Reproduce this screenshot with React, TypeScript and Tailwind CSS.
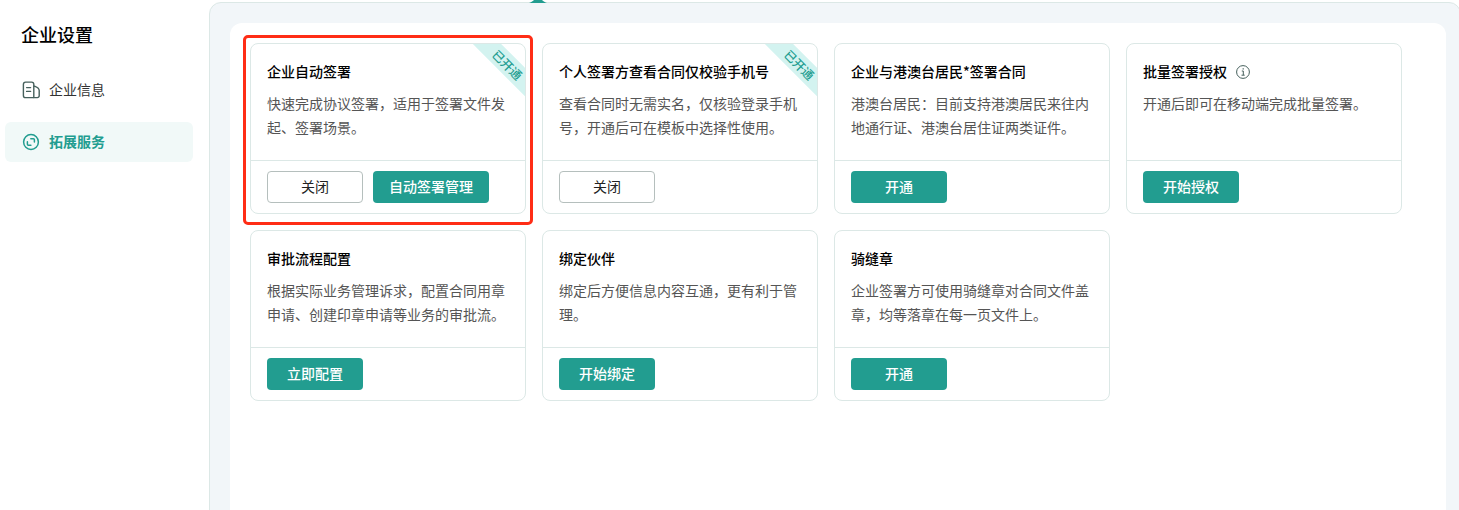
import React from "react";
import clsx from "clsx";

type Action = {
    label: string;
    outline?: boolean;
    wide?: boolean;
};

type Service = {
    id: number;
    title: string;
    lines: string[];
    opened?: boolean;
    info?: boolean;
    highlighted?: boolean;
    actions: Action[];
};

const services: Service[] = [
    {
        id: 1,
        title: "企业自动签署",
        lines: ["快速完成协议签署，适用于签署文件发", "起、签署场景。"],
        opened: true,
        highlighted: true,
        actions: [
            { label: "关闭", outline: true },
            { label: "自动签署管理", wide: true },
        ],
    },
    {
        id: 2,
        title: "个人签署方查看合同仅校验手机号",
        lines: ["查看合同时无需实名，仅核验登录手机", "号，开通后可在模板中选择性使用。"],
        opened: true,
        actions: [{ label: "关闭", outline: true }],
    },
    {
        id: 3,
        title: "企业与港澳台居民*签署合同",
        lines: ["港澳台居民：目前支持港澳居民来往内", "地通行证、港澳台居住证两类证件。"],
        actions: [{ label: "开通" }],
    },
    {
        id: 4,
        title: "批量签署授权",
        lines: ["开通后即可在移动端完成批量签署。"],
        info: true,
        actions: [{ label: "开始授权" }],
    },
    {
        id: 5,
        title: "审批流程配置",
        lines: ["根据实际业务管理诉求，配置合同用章", "申请、创建印章申请等业务的审批流。"],
        actions: [{ label: "立即配置" }],
    },
    {
        id: 6,
        title: "绑定伙伴",
        lines: ["绑定后方便信息内容互通，更有利于管", "理。"],
        actions: [{ label: "开始绑定" }],
    },
    {
        id: 7,
        title: "骑缝章",
        lines: ["企业签署方可使用骑缝章对合同文件盖", "章，均等落章在每一页文件上。"],
        actions: [{ label: "开通" }],
    },
];

function CompanyIcon() {
    return (
        <svg width="18" height="18" viewBox="0 0 18 18" fill="none" stroke="#46605c" strokeWidth="1.4" strokeLinecap="round" strokeLinejoin="round">
            <path d="M11.8 16.6H3.6A2.2 2.2 0 0 1 1.4 14.4V3.3A2.2 2.2 0 0 1 3.6 1.1h6a2.2 2.2 0 0 1 2.2 2.2v13.3Z" />
            <path d="M12 5.3h1q4.2 1.4 4.2 4.3v5.2a1.8 1.8 0 0 1-1.8 1.8h-3.6" />
            <path d="M4.6 6.6h4M4.6 10.4h4" />
        </svg>
    );
}

function ServiceIcon() {
    return (
        <svg width="18" height="18" viewBox="0 0 18 18" fill="none" stroke="#229d90" strokeWidth="1.5" strokeLinecap="round" strokeLinejoin="round">
            <circle cx="9" cy="9" r="7.4" />
            <path d="M8.8 5.7h2.6a1 1 0 0 1 1 1v2.4M5.4 8.8v2.5a1 1 0 0 0 1 1h2.5" />
        </svg>
    );
}

function InfoIcon() {
    return (
        <svg className="mt-px" width="14" height="14" viewBox="0 0 14 14" fill="none" stroke="#46605c" strokeWidth="1">
            <circle cx="7" cy="7" r="6.4" />
            <path d="M5.8 6h1.5v4M5.5 10.2h3.2" />
            <path d="M7.2 3.3v1.2" strokeWidth="1.2" />
        </svg>
    );
}

function ServiceCard({ service }: { service: Service }) {
    return (
        <div className="relative">
            <div className="relative h-[171px] overflow-hidden rounded-lg border border-[#dce8e6] bg-white">
                {service.opened && (
                    <div className="absolute top-[10.5px] -right-[32.5px] h-5 w-[100px] rotate-45 bg-[#d3f3f0] pr-px text-center text-xs leading-[19px] font-medium text-[#229d90]">
                        已开通
                    </div>
                )}
                <div className="h-[116px] px-4 pt-[15px]">
                    <div className="flex h-6 items-center gap-[9px] font-medium text-black">
                        <span>{service.title}</span>
                        {service.info && <InfoIcon />}
                    </div>
                    <div className="pt-2 leading-6 text-[#555]">
                        {service.lines.map((line) => (
                            <p key={line} className="whitespace-nowrap">
                                {line}
                            </p>
                        ))}
                    </div>
                </div>
                <div className="flex gap-2.5 border-t border-[#dce8e6] px-4 pt-2.5">
                    {service.actions.map((action) => (
                        <button
                            key={action.label}
                            type="button"
                            className={clsx(
                                "h-8 rounded-sm pb-0.5",
                                action.wide ? "w-[116px]" : "w-24",
                                action.outline
                                    ? "border border-[#b5bfbd] bg-white text-[#222]"
                                    : "bg-[#229d90] font-medium text-white"
                            )}
                        >
                            {action.label}
                        </button>
                    ))}
                </div>
            </div>
            {service.highlighted && (
                <div className="pointer-events-none absolute -top-2 -right-[7px] -bottom-[11px] -left-[7px] rounded-[5px] border-3 border-[#ff2d16]" />
            )}
        </div>
    );
}

export default function App() {
    return (
        <div className="relative flex h-[510px] w-[1459px] overflow-hidden bg-white font-['Noto_Sans_CJK_SC',sans-serif] text-sm">
            <aside className="w-[209px] shrink-0 px-[5px] pt-[21px]">
                <h1 className="pl-4 text-lg leading-[26px] font-medium text-black">企业设置</h1>
                <nav className="mt-[23px] flex w-[188px] flex-col gap-3">
                    <a className="flex h-10 items-center gap-[9px] rounded-md pl-[17px] text-[#333]">
                        <CompanyIcon />
                        <span className="pb-0.5">企业信息</span>
                    </a>
                    <a className="flex h-10 items-center gap-[9px] rounded-md bg-[#f1f9f8] pl-[17px] font-bold text-[#229d90]">
                        <ServiceIcon />
                        <span className="pb-0.5">拓展服务</span>
                    </a>
                </nav>
            </aside>

            <main className="mt-0.5 h-[540px] w-[1252px] shrink-0 rounded-xl border border-[#dce8e6] bg-[#f2f6f9] pt-5 pl-5">
                <section className="h-[520px] w-[1216px] rounded-xl bg-white p-5">
                    <div className="grid grid-cols-[repeat(4,276px)] gap-4">
                        {services.map((service) => (
                            <ServiceCard key={service.id} service={service} />
                        ))}
                    </div>
                </section>
            </main>

            {/* bottom edge of the top bar's round marker */}
            <svg className="absolute top-0 left-[529px]" width="18" height="3" viewBox="0 0 18 3">
                <path d="M0 3C2 2.2 3.5 1.4 5 0h8C14.5 1.4 16 2.2 18 3Z" fill="#229d90" />
            </svg>
        </div>
    );
}
